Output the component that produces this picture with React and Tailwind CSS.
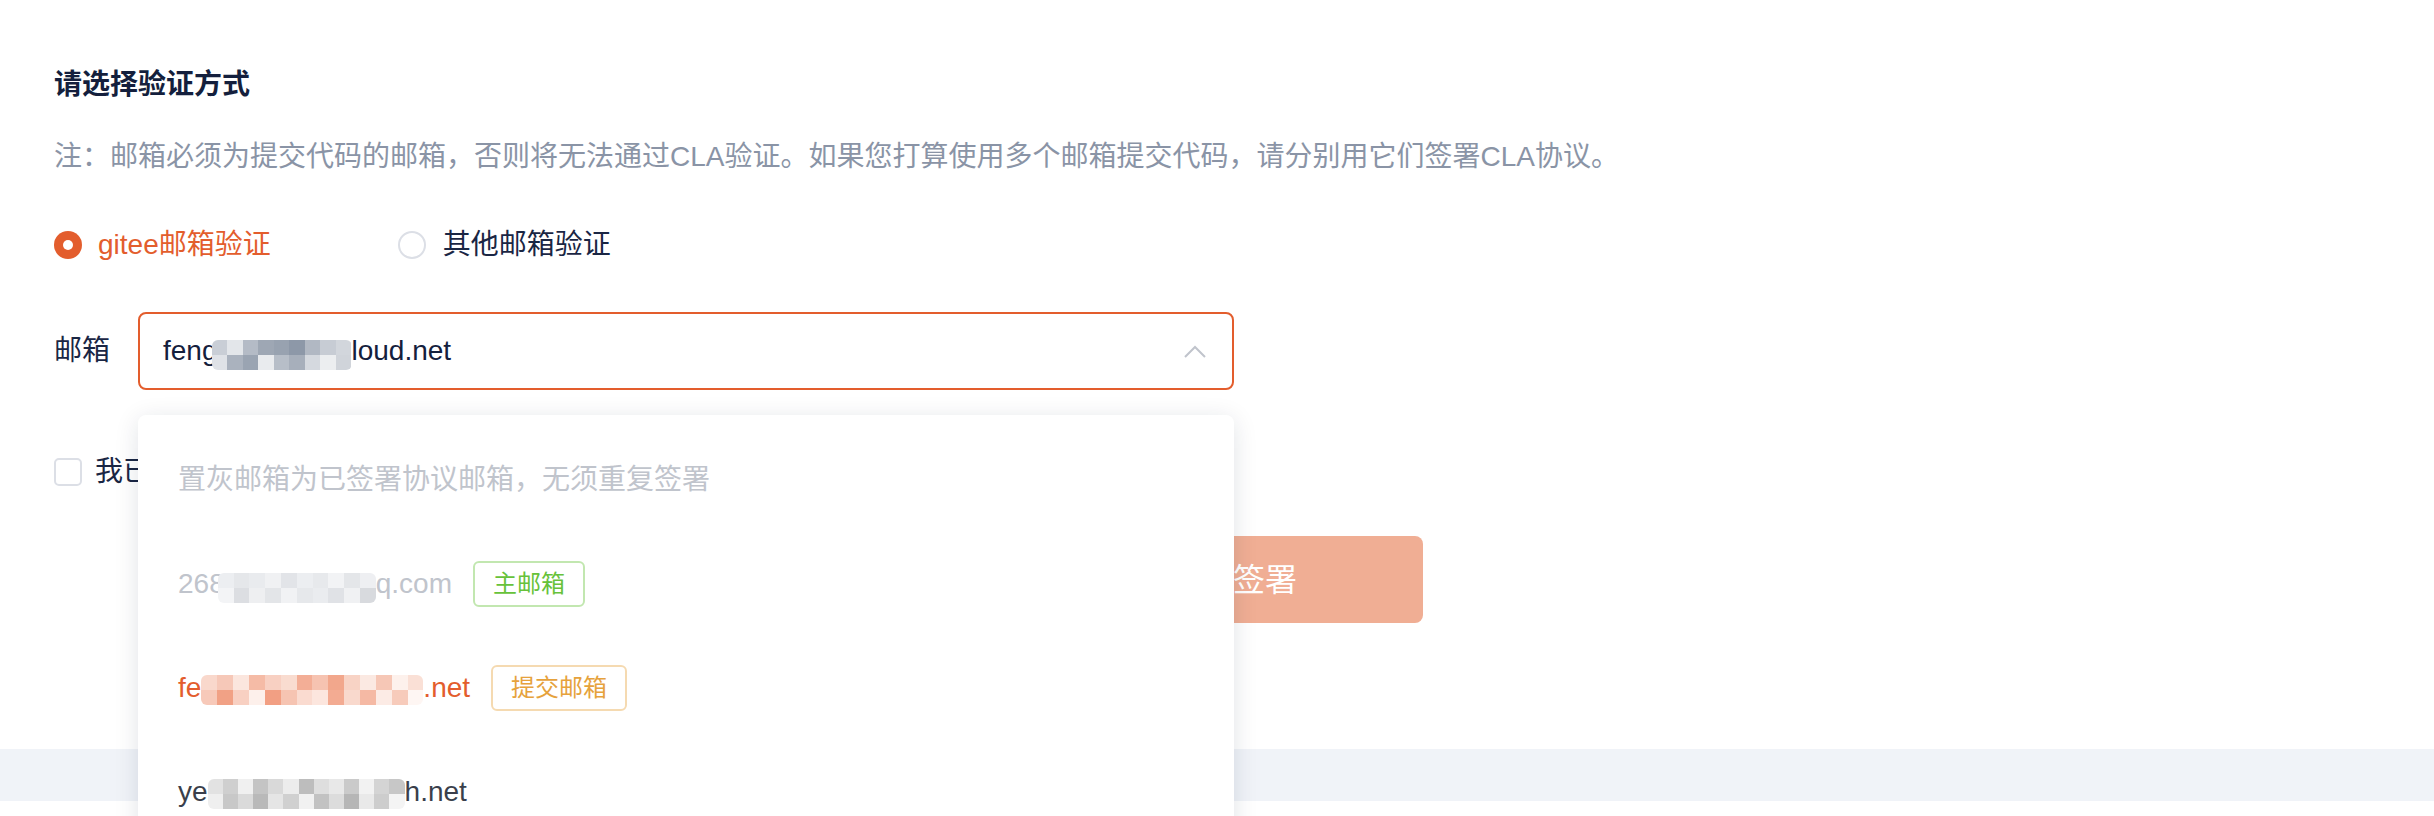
import React from 'react';

const FONT = { fontFamily: '"Liberation Sans", "Noto Sans CJK SC", sans-serif' };

// mosaic rows used to hide parts of the addresses
const masks = {
  select: [
    ['#c9ced6', '#e3e6ea', '#b4bbc6', '#9ea7b4', '#98a2b0', '#8d98a8', '#b1b8c3', '#c7ccd4', '#d2d6dc'],
    ['#dfe2e7', '#aab2be', '#9aa4b2', '#e9ebee', '#b7bec8', '#a7afbb', '#d5d9df', '#eceef0', '#d0d4da'],
  ],
  grey: [
    ['#eceef1', '#e5e7ea', '#e9ebee', '#f0f1f3', '#e2e4e8', '#eceef1', '#e7e9ec', '#f2f3f5', '#e4e6e9', '#eeeff2'],
    ['#f3f4f6', '#dcdee2', '#eeeff1', '#e3e5e8', '#f1f2f4', '#e6e8eb', '#eaecef', '#e0e2e6', '#f0f1f3', '#d8dade'],
  ],
  orange: [
    ['#f9d8cc', '#f6c8b8', '#fbe6de', '#f5bba6', '#f8d0c2', '#f9dcd0', '#f3ae96', '#f6c3b1', '#f2a78c', '#f8d3c5', '#fbe9e2', '#f6c7b6', '#fdf1ec', '#fae0d6'],
    ['#f7c9b9', '#f1a185', '#f8d0c2', '#fdf0eb', '#f29f83', '#f6c4b2', '#fadbd0', '#fce6de', '#f3ab92', '#f9d9cd', '#f5b9a4', '#fcebe5', '#f7cbbb', '#fef6f3'],
  ],
  dark: [
    ['#e2e2e2', '#cfcfcf', '#f0f0f0', '#c4c4c4', '#d9d9d9', '#ececec', '#bdbdbd', '#dedede', '#e8e8e8', '#cacaca', '#f2f2f2', '#d4d4d4', '#c7c7c7'],
    ['#efefef', '#c8c8c8', '#dadada', '#b9b9b9', '#e5e5e5', '#d0d0d0', '#f1f1f1', '#c2c2c2', '#dcdcdc', '#b6b6b6', '#e9e9e9', '#cdcdcd', '#f4f4f4'],
  ],
};

function Mosaic({ rows, width }) {
  const cols = rows[0].length;
  return (
    <span
      className="inline-grid h-[30px] overflow-hidden rounded-[6px] align-middle translate-y-[2px]"
      style={{ width, gridTemplateColumns: `repeat(${cols}, 1fr)` }}
    >
      {rows.flat().map((c, i) => (
        <span key={i} style={{ backgroundColor: c }} />
      ))}
    </span>
  );
}

function Tag({ children, tone }) {
  const cls = tone === 'green'
    ? 'border-[#c2e7b0] text-[#67c23a]'
    : 'border-[#f5dab1] text-[#e6a23c]';
  return (
    <span className={`ml-[21px] inline-flex h-[46px] items-center rounded-[6px] border-2 bg-white px-[18px] text-[24px] ${cls}`}>
      {children}
    </span>
  );
}

function Option({ children, className }) {
  return (
    <div className={`flex h-[104px] items-center pl-[40px] text-[28px] ${className}`}>
      {children}
    </div>
  );
}

export default function App() {
  return (
    <div className="relative h-[816px] w-[2434px] overflow-hidden bg-white" style={FONT}>
      <div className="pl-[54px] pt-[65px]">
        <h2 className="text-[28px] font-bold leading-[40px] text-[#141f3d]">请选择验证方式</h2>
        <p className="mt-[32px] text-[28px] leading-[40px] text-[#8a94a6]">
          注：邮箱必须为提交代码的邮箱，否则将无法通过CLA验证。如果您打算使用多个邮箱提交代码，请分别用它们签署CLA协议。
        </p>

        <div className="mt-[48px] flex h-[40px] items-center text-[28px]">
          <label className="flex items-center">
            <span className="flex h-[28px] w-[28px] items-center justify-center rounded-full bg-[#e35d2d]">
              <span className="h-[10px] w-[10px] rounded-full bg-white" />
            </span>
            <span className="ml-[16px] text-[#e35d2d]">gitee邮箱验证</span>
          </label>
          <label className="ml-[127px] flex items-center">
            <span className="h-[28px] w-[28px] rounded-full border-2 border-[#dcdfe6]" />
            <span className="ml-[17px] text-[#1a2644]">其他邮箱验证</span>
          </label>
        </div>

        <div className="mt-[47px] flex items-center">
          <span className="w-[84px] text-[28px] text-[#1a2644]">邮箱</span>
          <div className="flex h-[78px] w-[1096px] items-center justify-between rounded-[8px] border-2 border-[#e35d2d] pl-[23px] pr-[26px]">
            <span className="text-[28px] text-[#14203d]">
              feng<span className="-ml-[6px]"><Mosaic rows={masks.select} width={140} /></span>loud.net
            </span>
            <svg width="22" height="13" viewBox="0 0 22 13" fill="none">
              <path d="M1 12L11 2l10 10" stroke="#c0c4cc" strokeWidth="2" />
            </svg>
          </div>
        </div>

        <div className="mt-[62px] flex h-[40px] items-center">
          <span className="h-[28px] w-[28px] rounded-[5px] border-2 border-[#dcdfe6]" />
          <span className="ml-[13px] text-[28px] text-[#1a2644]">我已阅读并同意《贡献者许可协议》</span>
        </div>

        <div className="mt-[44px] flex w-[1369px] justify-end">
          <button className="flex h-[87px] w-[316px] items-center justify-center rounded-[8px] bg-[#f0ae94] text-[32px] text-white">
            签署
          </button>
        </div>
      </div>

      <div className="mt-[126px] h-[52px] bg-[#f0f3f8]" />

      {/* open select dropdown, lies over the form */}
      <div className="absolute left-[138px] top-[415px] w-[1096px] rounded-[8px] bg-white pt-[13px] shadow-[0_4px_24px_rgba(20,30,60,0.12)]">
        <Option className="text-[#c0c4cc]">置灰邮箱为已签署协议邮箱，无须重复签署</Option>
        <Option className="text-[#c0c4cc]">
          268<span className="-ml-[7px]"><Mosaic rows={masks.grey} width={158} /></span>q.com
          <Tag tone="green">主邮箱</Tag>
        </Option>
        <Option className="text-[#e35d2d]">
          fe<Mosaic rows={masks.orange} width={222} />.net
          <Tag tone="orange">提交邮箱</Tag>
        </Option>
        <Option className="text-[#3a3f4b]">
          ye<Mosaic rows={masks.dark} width={197} />h.net
        </Option>
      </div>
    </div>
  );
}
